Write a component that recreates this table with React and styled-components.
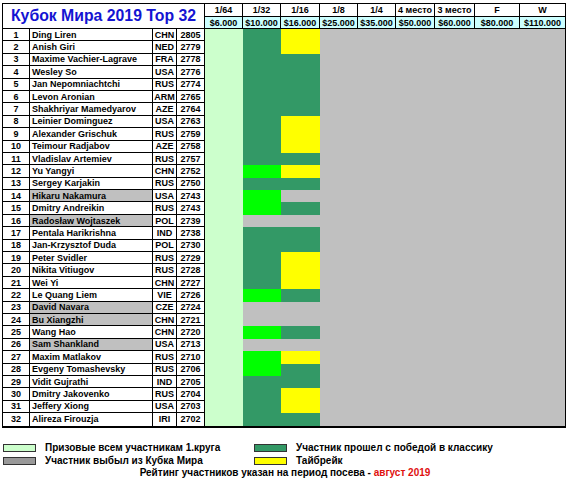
import React from 'react';
import styled, { createGlobalStyle } from 'styled-components';

const GlobalStyle = createGlobalStyle`
  body {
    margin: 0;
    background: #fff;
    font-family: "Liberation Sans", Arial, sans-serif;
    color: #000;
  }
`;

// цвета ячеек
const FILL = {
  d: '#339966', // победа в классику
  b: '#00ff00',
  y: '#ffff00', // тайбрейк
  g: '#c0c0c0', // выбыл
};

const ROUNDS = [
  ['1/64', '$6.000'],
  ['1/32', '$10.000'],
  ['1/16', '$16.000'],
  ['1/8', '$25.000'],
  ['1/4', '$35.000'],
  ['4 место', '$50.000'],
  ['3 место', '$60.000'],
  ['F', '$80.000'],
  ['W', '$110.000'],
];

const PLAYERS = [
  [1, 'Ding Liren', 'CHN', 2805, 'd', 'y'],
  [2, 'Anish Giri', 'NED', 2779, 'd', 'y'],
  [3, 'Maxime Vachier-Lagrave', 'FRA', 2778, 'd', 'd'],
  [4, 'Wesley So', 'USA', 2776, 'd', 'd'],
  [5, 'Jan Nepomniachtchi', 'RUS', 2774, 'd', 'd'],
  [6, 'Levon Aronian', 'ARM', 2765, 'd', 'd'],
  [7, 'Shakhriyar Mamedyarov', 'AZE', 2764, 'd', 'd'],
  [8, 'Leinier Dominguez', 'USA', 2763, 'd', 'y'],
  [9, 'Alexander Grischuk', 'RUS', 2759, 'd', 'y'],
  [10, 'Teimour Radjabov', 'AZE', 2758, 'd', 'y'],
  [11, 'Vladislav Artemiev', 'RUS', 2757, 'd', 'd'],
  [12, 'Yu Yangyi', 'CHN', 2752, 'b', 'y'],
  [13, 'Sergey Karjakin', 'RUS', 2750, 'd', 'd'],
  [14, 'Hikaru Nakamura', 'USA', 2743, 'b', 'g', true],
  [15, 'Dmitry Andreikin', 'RUS', 2743, 'b', 'd'],
  [16, 'Radosław Wojtaszek', 'POL', 2739, 'g', 'g', true],
  [17, 'Pentala Harikrishna', 'IND', 2738, 'd', 'd'],
  [18, 'Jan-Krzysztof Duda', 'POL', 2730, 'd', 'd'],
  [19, 'Peter Svidler', 'RUS', 2729, 'd', 'y'],
  [20, 'Nikita Vitiugov', 'RUS', 2728, 'd', 'y'],
  [21, 'Wei Yi', 'CHN', 2727, 'd', 'y'],
  [22, 'Le Quang Liem', 'VIE', 2726, 'b', 'd'],
  [23, 'David Navara', 'CZE', 2724, 'g', 'g', true],
  [24, 'Bu Xiangzhi', 'CHN', 2721, 'g', 'g', true],
  [25, 'Wang Hao', 'CHN', 2720, 'b', 'd'],
  [26, 'Sam Shankland', 'USA', 2713, 'g', 'g', true],
  [27, 'Maxim Matlakov', 'RUS', 2710, 'b', 'y'],
  [28, 'Evgeny Tomashevsky', 'RUS', 2706, 'b', 'd'],
  [29, 'Vidit Gujrathi', 'IND', 2705, 'd', 'd'],
  [30, 'Dmitry Jakovenko', 'RUS', 2704, 'd', 'y'],
  [31, 'Jeffery Xiong', 'USA', 2703, 'd', 'y'],
  [32, 'Alireza Firouzja', 'IRI', 2702, 'd', 'd'],
];

const Board = styled.div`
  display: grid;
  grid-template-columns: 27px 123px 24px 28px 38px 38px 39px 38px 38px 39px 40px 45px 45px;
  grid-template-rows: 13px 12px repeat(32, 12.4px);
  width: max-content;
  margin: 3px 0 0 2px;
  border: 1px solid #000;
  border-bottom-width: 2px;
  font-weight: bold;
`;

const Title = styled.div`
  grid-column: 1 / 5;
  grid-row: 1 / 3;
  display: flex;
  align-items: center;
  justify-content: center;
  border-right: 1px solid #000;
  border-bottom: 1px solid #000;
  color: #1414d2;
  font-size: 15.8px;
  white-space: nowrap;
`;

const RoundCell = styled.div`
  display: flex;
  align-items: center;
  justify-content: center;
  font-size: 9px;
  white-space: nowrap;
  border-bottom: 1px solid #000;
  border-right: ${(p) => (p.$last ? 'none' : '1px solid #000')};
  background: ${(p) => (p.$price ? '#ccffff' : '#fff')};
`;

const Cell = styled.div`
  display: flex;
  align-items: center;
  justify-content: ${(p) => (p.$left ? 'flex-start' : 'center')};
  padding-left: ${(p) => (p.$left ? '2px' : '0')};
  font-size: 9px;
  white-space: nowrap;
  border-right: 1px solid #000;
  border-bottom: ${(p) => (p.$lastRow ? 'none' : '1px solid #000')};
  background: ${(p) => (p.$out ? '#c0c0c0' : '#fff')};
`;

const PrizeColumn = styled.div`
  grid-column: 5;
  grid-row: 3 / 35;
  background: #ccffcc;
`;

const Result = styled.div`
  background: ${(p) => FILL[p.$kind]};
`;

const OutBlock = styled.div`
  grid-column: 8 / 14;
  grid-row: 3 / 35;
  background: #c0c0c0;
`;

const Legend = styled.div`
  display: grid;
  grid-template-columns: 251px auto;
  row-gap: 1px;
  margin: 14px 0 0 3px;
  font-size: 10px;
  line-height: 12px;
  font-weight: bold;
`;

const LegendItem = styled.div`
  display: flex;
  align-items: center;
  gap: 9px;
  white-space: nowrap;
`;

const Swatch = styled.span`
  width: 31px;
  height: 6px;
  border: 1px solid #333;
  background: ${(p) => p.$color};
`;

const Note = styled.div`
  margin-top: 0;
  text-align: center;
  font-size: 10px;
  line-height: 12px;
  font-weight: bold;
  white-space: nowrap;
`;

const Red = styled.span`
  color: #e01010;
`;

export default function App() {
  return (
    <>
      <GlobalStyle />
      <Board>
        <Title>Кубок Мира 2019 Top 32</Title>
        {ROUNDS.map(([label], i) => (
          <RoundCell key={label} $last={i === ROUNDS.length - 1}>{label}</RoundCell>
        ))}
        {ROUNDS.map(([label, prize], i) => (
          <RoundCell key={label + 'p'} $price $last={i === ROUNDS.length - 1}>{prize}</RoundCell>
        ))}
        <PrizeColumn />
        <OutBlock />
        {PLAYERS.map(([n, name, country, rating, r32, r16, out]) => {
          const lastRow = n === PLAYERS.length;
          return (
            <React.Fragment key={n}>
              <Cell $lastRow={lastRow}>{n}</Cell>
              <Cell $left $out={out} $lastRow={lastRow}>{name}</Cell>
              <Cell $lastRow={lastRow}>{country}</Cell>
              <Cell $lastRow={lastRow}>{rating}</Cell>
              <Result $kind={r32} />
              <Result $kind={r16} />
            </React.Fragment>
          );
        })}
      </Board>
      <Legend>
        <LegendItem><Swatch $color="#ccffcc" />Призовые всем участникам 1.круга</LegendItem>
        <LegendItem><Swatch $color="#339966" />Участник прошел с победой в классику</LegendItem>
        <LegendItem><Swatch $color="#999" />Участник выбыл из Кубка Мира</LegendItem>
        <LegendItem><Swatch $color="#ffff00" />Тайбрейк</LegendItem>
      </Legend>
      <Note>
        Рейтинг участников указан на период посева - <Red>август 2019</Red>
      </Note>
    </>
  );
}
